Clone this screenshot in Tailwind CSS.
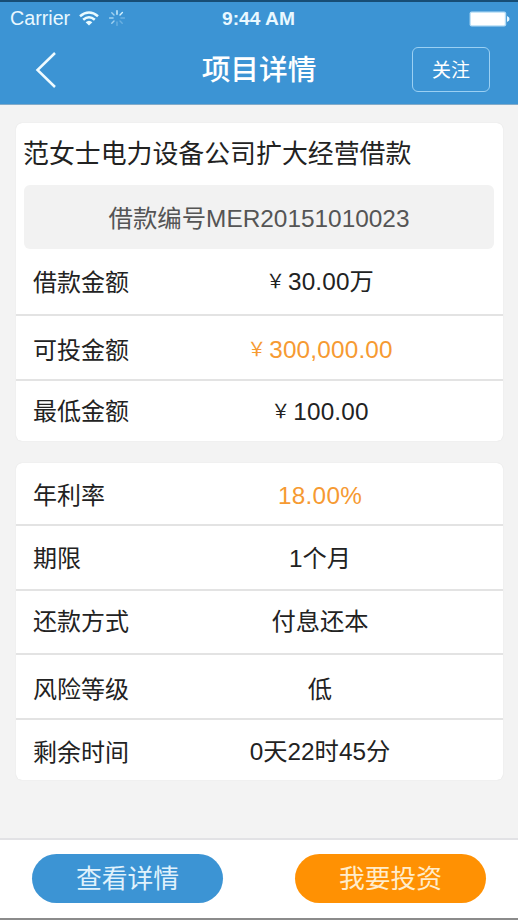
<!DOCTYPE html>
<html lang="zh-CN">
<head>
<meta charset="utf-8">
<title>项目详情</title>
<script src="https://cdn.jsdelivr.net/npm/@tailwindcss/browser@4"></script>
</head>
<body class="bg-[#f3f3f3]">
<div class="flex h-[920px] w-[518px] flex-col overflow-hidden bg-[#f3f3f3] font-['Liberation_Sans','Noto_Sans_CJK_SC',sans-serif] text-[24.3px] text-[#222]">
  <header class="h-[105px] shrink-0 border-t-2 border-b border-t-[#174d75] border-b-[#83abc9] bg-[#3c94d4] text-white">
    <div class="grid h-[33px] grid-cols-3 items-center pr-2 pl-[10px] text-[#e9f8ff]">
      <div class="flex items-center">
        <span class="text-[19.7px] leading-none">Carrier</span>
        <svg class="ml-[9px] h-[15px] w-[20px]" viewBox="0 0 20 15" fill="none" stroke="#e9fbff" stroke-width="2.6"><path d="M1 5.2Q10-2.2 19 5.2M4.2 8.7Q10 3.8 15.8 8.7"/><path d="M6.6 11.2Q10 8.2 13.4 11.2L10 14.6Z" fill="#e9fbff" stroke="none"/></svg>
        <svg class="ml-[10px] size-[16px]" viewBox="-8 -8 16 16" stroke="#d5f2ff" stroke-width="1.4" stroke-linecap="round"><path d="M0-3.7V-7.3M3-3L5.4-5.4"/><path opacity=".3" d="M3.9 0H7.4M3 3L5.2 5.2M0 3.9V7.4"/><path opacity=".65" d="M-3 3L-5.2 5.2M-3.9 0H-7.4M-3-3L-5.2-5.2"/></svg>
      </div>
      <div class="-ml-[3px] text-center text-[19.2px] leading-none font-bold whitespace-nowrap">9:44 AM</div>
      <div class="flex items-center justify-end">
        <svg class="h-[16px] w-[41px]" viewBox="0 0 41 16"><rect x=".6" y=".6" width="36.6" height="14.8" rx="2" fill="#b5dcf5"/><rect x="1.8" y="1.8" width="34" height="12.4" rx="1" fill="#fff"/><path d="M38 5Q40.5 6 40.5 8T38 11Z" fill="#e5f6ff"/></svg>
      </div>
    </div>
    <div class="grid h-[69px] grid-cols-[1fr_auto_1fr] items-center pr-[28px] pl-[35px]">
      <svg class="h-[36px] w-[22px]" viewBox="0 0 22 36" fill="none" stroke="#f0fbff" stroke-width="2.5"><path d="M20 1L2.5 18L20 35"/></svg>
      <h1 class="-ml-[7px] pt-[2px] text-[28.7px] leading-none font-medium">项目详情</h1>
      <button class="h-[45px] w-[78px] justify-self-end rounded-[6px] border-[1.5px] border-[#9bd0f3] pt-[1px] text-[19px] leading-none">关注</button>
    </div>
  </header>

  <main class="flex flex-1 flex-col gap-[22px] pt-[18px] pr-[15px] pl-4">
    <section class="h-[318px] rounded-[6px] bg-white shadow-[0_0_1px_#d2d2d2]">
      <h2 class="flex h-[62px] items-center pt-[2px] pl-[7px] text-[25.9px] leading-none">范女士电力设备公司扩大经营借款</h2>
      <div class="mr-[9px] ml-2 flex h-[64px] items-center justify-center rounded-[6px] bg-[#f2f2f2] pt-[5px] text-[24.4px] leading-none text-[#555]">借款编号MER20151010023</div>
      <div class="flex h-[67px] items-center border-b-2 border-[#e3e3e3] pt-[2px] pl-[17px]"><span class="w-[120px] text-[24px]">借款金额</span><span class="flex w-[334px] items-center justify-center tracking-[0.15px]"><span class="w-[22px] text-[19px]">￥</span>30.00万</span></div>
      <div class="flex h-[65px] items-center border-b-2 border-[#e3e3e3] pt-[6px] pl-[17px]"><span class="w-[120px] text-[24px]">可投金额</span><span class="flex w-[334px] items-center justify-center tracking-[0.2px] text-[#f69a32]"><span class="w-[22px] text-[19px]">￥</span>300,000.00</span></div>
      <div class="flex h-[60px] items-center pt-[2px] pl-[17px]"><span class="w-[120px] text-[24px]">最低金额</span><span class="flex w-[334px] items-center justify-center tracking-[0.2px]"><span class="w-[22px] text-[19px]">￥</span>100.00</span></div>
    </section>

    <section class="h-[317px] rounded-[6px] bg-white shadow-[0_0_1px_#d2d2d2]">
      <div class="flex h-[63px] items-center border-b-2 border-[#e3e3e3] pt-[5px] pl-[17px]"><span class="w-[120px] text-[24px]">年利率</span><span class="w-[334px] text-center tracking-[0.3px] text-[#f69a32]">18.00%</span></div>
      <div class="flex h-[65px] items-center border-b-2 border-[#e3e3e3] pt-[3px] pl-[17px]"><span class="w-[120px] text-[24px]">期限</span><span class="w-[334px] text-center">1个月</span></div>
      <div class="flex h-[64px] items-center border-b-2 border-[#e3e3e3] pl-[17px]"><span class="w-[120px] text-[24px]">还款方式</span><span class="w-[334px] text-center">付息还本</span></div>
      <div class="flex h-[65px] items-center border-b-2 border-[#e3e3e3] pt-[7px] pl-[17px]"><span class="w-[120px] text-[24px]">风险等级</span><span class="w-[334px] text-center">低</span></div>
      <div class="flex h-[60px] items-center pt-[5px] pl-[17px]"><span class="w-[120px] text-[24px]">剩余时间</span><span class="w-[334px] text-center">0天22时45分</span></div>
    </section>
  </main>

  <footer class="flex h-[82px] shrink-0 items-start justify-between border-t-2 border-b-2 border-t-[#e2e2e5] border-b-[#8b8b8b] bg-white pt-[14px] pr-[32px] pl-[32px]">
    <button class="h-[49px] w-[191px] rounded-full bg-[#3c94d4] pt-[2px] text-[25.8px] leading-none text-[#e0f2fc]">查看详情</button>
    <button class="h-[49px] w-[191px] rounded-full bg-[#ff9103] pt-[2px] text-[25.8px] leading-none text-[#ffeccb]">我要投资</button>
  </footer>
</div>
</body>
</html>
